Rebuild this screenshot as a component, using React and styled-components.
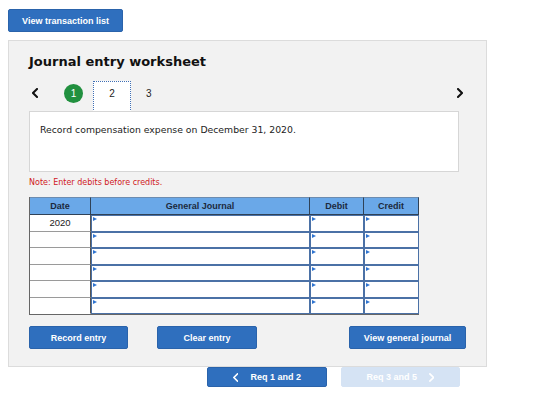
import React from 'react';
import styled, {createGlobalStyle} from 'styled-components';

const Global = createGlobalStyle`
    body {
        margin: 0;
        background: #ffffff;
        font-family: "DejaVu Sans", Verdana, sans-serif;
    }
`;

const Page = styled.div`
    padding: 9px 0 0 8px;
    width: 552px;
`;

const BlueButton = styled.button`
    height: ${props => props.small ? 20 : 23}px;
    width: ${props => props.width}px;
    padding: 0;
    border: 1px solid ${props => props.disabled ? '#d5e3f4' : '#2a63ab'};
    border-radius: 2px;
    background: ${props => props.disabled ? '#d5e3f4' : '#2f6fbe'};
    color: #ffffff;
    font-family: "Liberation Sans", Arial, sans-serif;
    font-size: 9px;
    font-weight: 700;
    display: flex;
    align-items: center;
    justify-content: center;
    gap: 12px;
    cursor: pointer;
`;

const Panel = styled.div`
    margin-top: 8px;
    height: 327px;
    box-sizing: border-box;
    padding: 13px 28px 0 20px;
    background: #f2f2f2;
    border: 1px solid #dcdcdc;
    width: 479px;
    display: flex;
    flex-direction: column;
`;

const Title = styled.h2`
    margin: 0;
    font-size: 13px;
    font-weight: 700;
    line-height: 16px;
    color: #111111;
`;

const StepRow = styled.div`
    margin-top: 11px;
    height: 31px;
    display: flex;
    align-items: flex-start;
    width: 437px;
`;

const Item = styled.span`
    height: 24px;
    display: flex;
    align-items: center;
    justify-content: center;
`;

const Arrow = styled(Item)`
    width: 12px;
`;

const Done = styled.span`
    width: 19px;
    height: 19px;
    margin-top: 3px;
    border-radius: 50%;
    background: #21903f;
    color: #fff;
    font-family: "Liberation Sans", sans-serif;
    font-size: 10px;
    display: flex;
    align-items: center;
    justify-content: center;
    margin-left: 23px;
`;

const Current = styled.span`
    box-sizing: border-box;
    width: 38px;
    height: 31px;
    margin-left: 10px;
    padding-bottom: 6px;
    background: #fff;
    border: 1px dotted #3f6fb5;
    display: flex;
    align-items: center;
    justify-content: center;
    font-family: "Liberation Sans", sans-serif;
    font-size: 10px;
    color: #222;
`;

const Step = styled(Item)`
    font-family: "Liberation Sans", sans-serif;
    font-size: 10px;
    color: #222;
    margin-left: 15px;
`;

const Spacer = styled.span`
    flex: 1;
`;

const Prompt = styled.div`
    box-sizing: border-box;
    margin-top: -1px;
    width: 430px;
    height: 61px;
    background: #fff;
    border: 1px solid #d6d6d6;
    padding: 12px 10px;
    font-size: 9.3px;
    color: #222;
`;

const Note = styled.div`
    margin-top: 6px;
    font-size: 8px;
    color: #d0201c;
    line-height: 10px;
`;

const Table = styled.div`
    margin-top: 9px;
    width: 389px;
    display: grid;
    grid-template-columns: 61px 219px 54px 55px;
    grid-template-rows: 18px repeat(6, 16.5px);
    border-left: 1px solid #666;
    border-bottom: 1px solid #666;
`;

const Head = styled.div`
    background: #6aa8e8;
    border-top: 1px solid #6c8cb0;
    border-right: 1px solid #2f4257;
    border-bottom: 1px solid #2f4257;
    display: flex;
    align-items: center;
    justify-content: center;
    font-family: "Liberation Sans", Arial, sans-serif;
    font-size: 9px;
    font-weight: 700;
    color: #1c2a3d;
`;

const DateCell = styled.div`
    background: #fff;
    border-bottom: 1px solid ${props => props.last ? 'transparent' : '#9a9a9a'};
    border-right: 1px solid #555;
    display: flex;
    align-items: center;
    justify-content: center;
    font-family: "Liberation Sans", sans-serif;
    font-size: 9.5px;
    color: #222;
`;

const InputCell = styled.div`
    position: relative;
    background: #fff;
    box-sizing: border-box;
    border: 1.5px solid #4b71a6;
    border-left-width: 1px;
    border-top-width: 1px;

    &::before {
        content: '';
        position: absolute;
        top: 1px;
        left: 1px;
        border-left: 4px solid #2f74d0;
        border-top: 2px solid transparent;
        border-bottom: 2px solid transparent;
    }
`;

const Actions = styled.div`
    margin-top: 11px;
    width: 437px;
    display: flex;
    gap: 29px;
`;

const Footer = styled.div`
    margin: 0 0 0 199px;
    display: flex;
    gap: 14px;
`;

const Chevron = ({dir, size = 10, color = '#111', stroke = 2}) => (
    <svg width={size * 0.6} height={size} viewBox="0 0 6 10">
        <polyline
            points={dir === 'left' ? '5,1 1,5 5,9' : '1,1 5,5 1,9'}
            fill="none"
            stroke={color}
            strokeWidth={stroke}
            strokeLinecap="square"
        />
    </svg>
);

const rows = ['2020', '', '', '', '', ''];

export default function App() {
    return (
        <Page>
            <Global/>
            <BlueButton width={115}>View transaction list</BlueButton>
            <Panel>
                <Title>Journal entry worksheet</Title>
                <StepRow>
                    <Arrow><Chevron dir="left"/></Arrow>
                    <Done>1</Done>
                    <Current>2</Current>
                    <Step>3</Step>
                    <Spacer/>
                    <Arrow><Chevron dir="right"/></Arrow>
                </StepRow>
                <Prompt>Record compensation expense on December 31, 2020.</Prompt>
                <Note>Note: Enter debits before credits.</Note>
                <Table>
                    <Head>Date</Head>
                    <Head>General Journal</Head>
                    <Head>Debit</Head>
                    <Head>Credit</Head>
                    {rows.map((d, i) => (
                        <React.Fragment key={i}>
                            <DateCell last={i === rows.length - 1}>{d}</DateCell>
                            <InputCell/>
                            <InputCell/>
                            <InputCell/>
                        </React.Fragment>
                    ))}
                </Table>
                <Actions>
                    <BlueButton width={99}>Record entry</BlueButton>
                    <BlueButton width={100}>Clear entry</BlueButton>
                    <Spacer/>
                    <BlueButton width={117}>View general journal</BlueButton>
                </Actions>
            </Panel>
            <Footer>
                <BlueButton width={120} small>
                    <Chevron dir="left" size={9} color="#fff" stroke={1.8}/>
                    <span>Req 1 and 2</span>
                </BlueButton>
                <BlueButton width={119} small disabled>
                    <span>Req 3 and 5</span>
                    <Chevron dir="right" size={9} color="#fff" stroke={1.8}/>
                </BlueButton>
            </Footer>
        </Page>
    );
}
